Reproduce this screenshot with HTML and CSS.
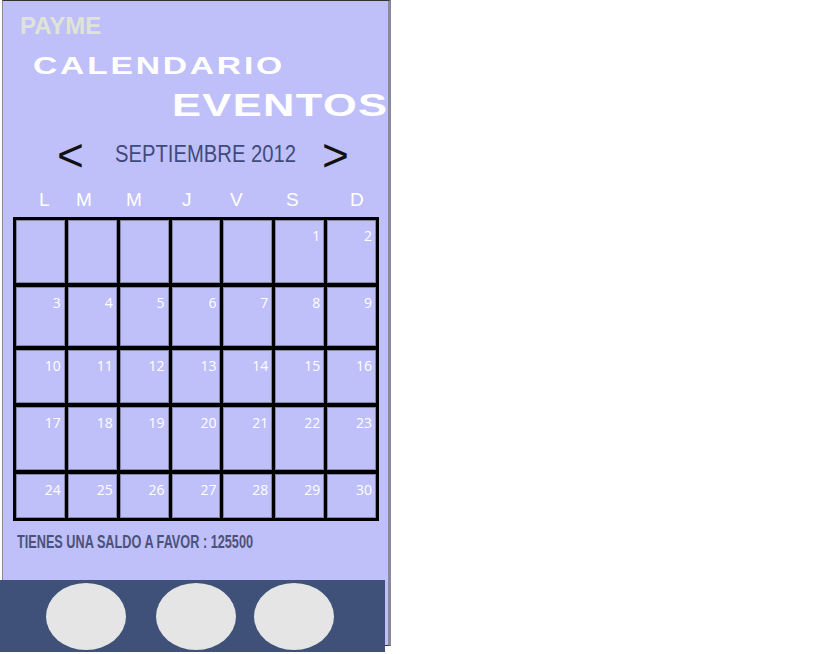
FILE: index.html
```html
<!DOCTYPE html>
<html lang="es">
<head>
    <meta charset="UTF-8">
    <meta name="viewport" content="width=device-width, initial-scale=1.0">
    <title>Payme - Calendario de eventos</title>
    <link rel="stylesheet" href="styles.css">
</head>
<body>

    <div class="phone">
        <!-- Cabecera -->
        <header class="head">
            <div class="brand">PAYME</div>
            <div class="title"><span>CALENDARIO</span></div>
            <div class="subtitle"><span>EVENTOS</span></div>
        </header>

        <!-- Navegacion de mes -->
        <div class="month-nav">
            <span class="arrow">&lt;</span>
            <span class="month">SEPTIEMBRE 2012</span>
            <span class="arrow">&gt;</span>
        </div>

        <div class="weekdays">
            <span>L</span><span>M</span><span>M</span><span>J</span><span>V</span><span>S</span><span>D</span>
        </div>

        <div class="calendar">
            <div class="day"></div><div class="day"></div><div class="day"></div><div class="day"></div><div class="day"></div><div class="day">1</div><div class="day">2</div>
            <div class="day">3</div><div class="day">4</div><div class="day">5</div><div class="day">6</div><div class="day">7</div><div class="day">8</div><div class="day">9</div>
            <div class="day">10</div><div class="day">11</div><div class="day">12</div><div class="day">13</div><div class="day">14</div><div class="day">15</div><div class="day">16</div>
            <div class="day">17</div><div class="day">18</div><div class="day">19</div><div class="day">20</div><div class="day">21</div><div class="day">22</div><div class="day">23</div>
            <div class="day">24</div><div class="day">25</div><div class="day">26</div><div class="day">27</div><div class="day">28</div><div class="day">29</div><div class="day">30</div>
        </div>

        <p class="balance"><span>TIENES UNA SALDO A FAVOR : 125500</span></p>

        <!-- Barra inferior -->
        <nav class="tabbar">
            <span class="tab"></span>
            <span class="tab"></span>
            <span class="tab"></span>
        </nav>
    </div>

</body>
</html>
```

FILE: styles.css
```css
body {
    margin: 0;
    padding: 0 0 8px 0;
    background-color: #ffffff;
    font-family: 'Liberation Sans', Arial, sans-serif;
}

.phone {
    box-sizing: border-box;
    width: 389px;
    height: 646px;
    margin-left: 2px;
    display: flex;
    flex-direction: column;
    background-color: #bfc0fa;  /* lavanda */
    border-top: 1px solid #333333;
    border-left: 1px solid #8a8a8a;
    border-right: 3px solid #8a8a9a;
    border-bottom: 1px solid #333333;
}

.phone > * {
    flex-shrink: 0;
}

/* Cabecera */
.head {
    padding-top: 13px;
}

.brand {
    padding-left: 17px;
    font-size: 24px;
    line-height: 1;
    font-weight: bold;
    color: #dfe4d5;
}

.title,
.subtitle {
    line-height: 1;
    font-weight: bold;
    color: #ffffff;
    white-space: nowrap;
}

.title span,
.subtitle span {
    display: inline-block;
    transform: scaleX(1.4);
    transform-origin: left center;
}

.title {
    margin-top: 16px;
    padding-left: 30px;
    font-size: 24px;
    letter-spacing: 2px;
}

.subtitle {
    margin-top: 12px;
    padding-left: 169px;
    font-size: 31px;
    letter-spacing: 1px;
}

/* Mes */
.month-nav {
    margin-top: 22px;
    height: 23px;
    display: flex;
    align-items: center;
    padding-left: 54px;
}

.arrow {
    font-size: 46px;
    line-height: 1;
    color: #111111;
}

.month {
    display: inline-block;
    margin-left: 31px;
    width: 207px;
    font-size: 23px;
    line-height: 1;
    color: #3f4a7a;
    white-space: nowrap;
    transform: scaleX(0.88);
    transform-origin: left center;
}

/* Dias de la semana */
.weekdays {
    margin-top: 24px;
    padding-left: 36px;
    display: grid;
    grid-template-columns: 37px 50px 56px 48px 56px 64px 1fr;
    font-size: 19px;
    line-height: 1;
    color: #ffffff;
}

/* Calendario */
.calendar {
    margin-top: 8px;
    margin-left: 10px;
    width: 366px;
    box-sizing: border-box;
    padding: 3px;
    display: grid;
    grid-template-columns: repeat(7, 1fr);
    grid-template-rows: 63px 59px 53px 63px 44px;
    column-gap: 3px;
    row-gap: 4px;
    background-color: #000000;
}

.day {
    background-color: #bfc0fa;
    border: 1px solid #8486a8;
    padding: 7px 3px 0 0;
    text-align: right;
    font-family: 'Open Sans', sans-serif;
    font-size: 14px;
    line-height: 1.2;
    color: #ffffff;
}

/* Saldo */
.balance {
    margin: 12px 0 0 0;
    padding-left: 14px;
    font-size: 18px;
    line-height: 1;
    font-weight: bold;
    color: #4b527a;
    white-space: nowrap;
}

.balance span {
    display: inline-block;
    transform: scaleX(0.705);
    transform-origin: left center;
}

/* Barra inferior */
.tabbar {
    margin-top: auto;
    margin-left: -3px;
    margin-bottom: -7px;
    width: 385px;
    height: 72px;
    box-sizing: border-box;
    padding: 3px 0 0 46px;
    display: flex;
    background-color: #3f5079;
}

.tab {
    width: 80px;
    height: 67px;
    border-radius: 50%;
    background-color: #e5e5e5;
}

.tab + .tab {
    margin-left: 30px;
}

.tab:last-child {
    margin-left: 18px;
}
```
